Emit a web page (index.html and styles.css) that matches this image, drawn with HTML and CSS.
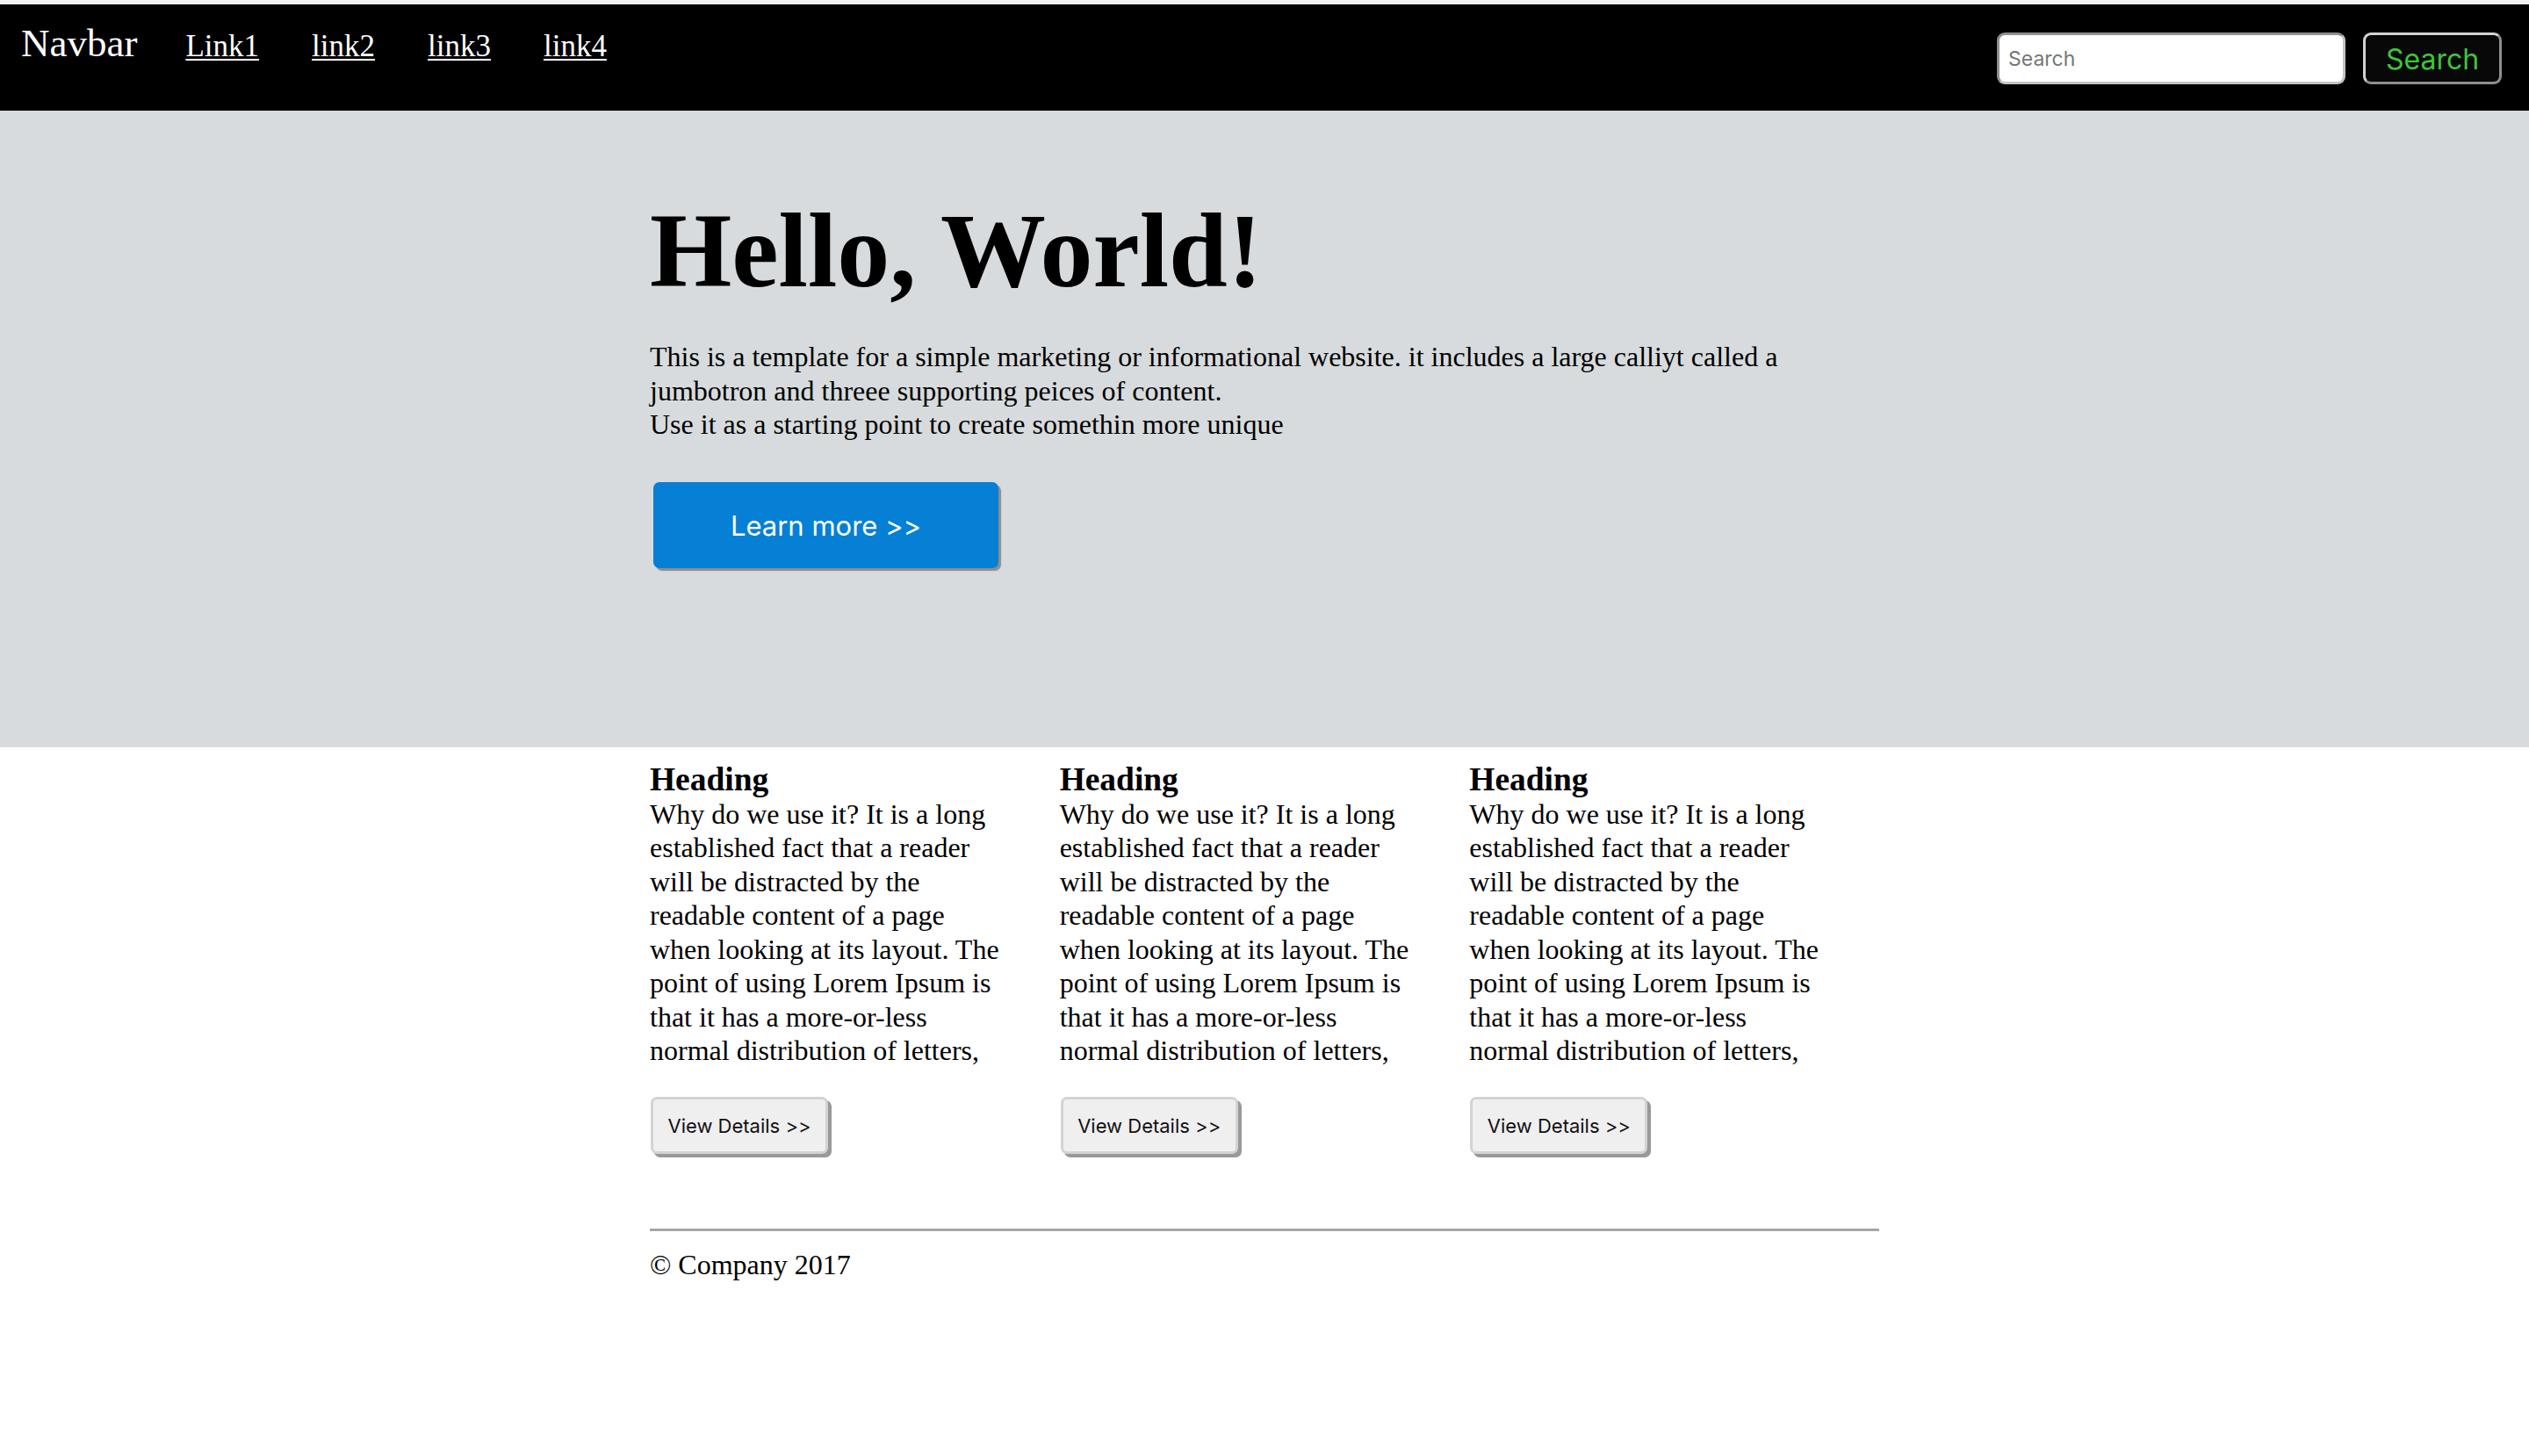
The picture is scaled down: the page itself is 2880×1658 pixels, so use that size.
FILE: index.html
```html
<!DOCTYPE html>
<html lang="en">
<head>
<meta charset="utf-8">
<title>Jumbotron template</title>
<link rel="stylesheet" href="styles.css">
</head>
<body>
<div class="top-strip"></div>
<nav class="navbar">
  <span class="brand">Navbar</span>
  <div class="nav-links">
    <a class="nav-link" href="#">Link1</a>
    <a class="nav-link" href="#">link2</a>
    <a class="nav-link" href="#">link3</a>
    <a class="nav-link" href="#">link4</a>
  </div>
  <form class="search-form">
    <input class="search-input" type="text" placeholder="Search">
    <button class="search-btn" type="button">Search</button>
  </form>
</nav>
<section class="jumbotron">
  <div class="container">
    <h1 class="hero-title">Hello, World!</h1>
    <p class="hero-text">This is a template for a simple marketing or informational website. it includes a large calliyt called a jumbotron and threee supporting peices of content.<br>Use it as a starting point to create somethin more unique</p>
    <button class="btn-primary" type="button">Learn more &gt;&gt;</button>
  </div>
</section>
<main class="container">
  <div class="row">
    <div class="col">
      <h3 class="col-title">Heading</h3>
      <p class="col-text">Why do we use it? It is a long established fact that a reader will be distracted by the readable content of a page when looking at its layout. The point of using Lorem Ipsum is that it has a more-or-less normal distribution of letters,</p>
      <button class="btn-details" type="button">View Details &gt;&gt;</button>
    </div>
    <div class="col">
      <h3 class="col-title">Heading</h3>
      <p class="col-text">Why do we use it? It is a long established fact that a reader will be distracted by the readable content of a page when looking at its layout. The point of using Lorem Ipsum is that it has a more-or-less normal distribution of letters,</p>
      <button class="btn-details" type="button">View Details &gt;&gt;</button>
    </div>
    <div class="col">
      <h3 class="col-title">Heading</h3>
      <p class="col-text">Why do we use it? It is a long established fact that a reader will be distracted by the readable content of a page when looking at its layout. The point of using Lorem Ipsum is that it has a more-or-less normal distribution of letters,</p>
      <button class="btn-details" type="button">View Details &gt;&gt;</button>
    </div>
  </div>
  <hr class="divider">
  <footer class="footer">
    <p class="footer-text">&copy; Company 2017</p>
  </footer>
</main>
</body>
</html>
```
FILE: styles.css
```css
html, body {
  margin: 0;
  padding: 0;
  background: #ffffff;
}

body {
  font-family: "Liberation Serif", "Times New Roman", serif;
  font-size: 32px;
  line-height: 38.5px;
  color: #000;
}

.top-strip {
  height: 5px;
  background: #f1f1f1;
}

.navbar {
  height: 121px;
  box-sizing: border-box;
  background: #000;
  display: flex;
  align-items: baseline;
  padding: 19px 31px 0 24px;
}

.brand {
  color: #fff;
  font-size: 45px;
  line-height: 50px;
}

.nav-links {
  display: flex;
  align-items: baseline;
  gap: 60px;
  margin-left: 55px;
}

.nav-link {
  color: #fff;
  font-size: 35px;
  line-height: 42px;
  text-decoration: underline;
  text-decoration-thickness: 2px;
  text-underline-offset: 3px;
}

.search-form {
  margin: 0 0 0 auto;
  align-self: flex-start;
  margin-top: 13px;
  display: flex;
  gap: 20px;
}

.search-input {
  width: 397px;
  height: 59px;
  box-sizing: border-box;
  border: 3px solid #8f8f8f;
  border-right-color: #c4c4c4;
  border-bottom-color: #c4c4c4;
  border-radius: 9px;
  padding: 0 10px;
  font-family: "Inter", "Liberation Sans", sans-serif;
  font-size: 23px;
  background: #fff;
  outline: none;
}

.search-input::placeholder {
  color: #777;
}

.search-btn {
  width: 158px;
  height: 59px;
  box-sizing: border-box;
  border: 3px solid #d2d2d2;
  border-right-color: #8e8e8e;
  border-bottom-color: #8e8e8e;
  border-radius: 9px;
  background: #080808;
  color: #3ec53a;
  font-family: "Inter", "Liberation Sans", sans-serif;
  font-size: 32px;
  padding: 2px 0 0;
  line-height: 1;
}

.jumbotron {
  background: #d7dbdd;
  padding: 92px 0 204px;
}

.container {
  width: 1400px;
  margin: 0 auto;
}

.hero-title {
  margin: 0;
  font-size: 120px;
  line-height: 136px;
  font-weight: bold;
}

.hero-text {
  margin: 33px 0 46px;
}

.btn-primary {
  display: block;
  margin-left: 4px;
  width: 393px;
  height: 98px;
  border: none;
  border-radius: 7px;
  background: #0580d5;
  color: #fff;
  font-family: "Inter", "Liberation Sans", sans-serif;
  font-size: 31px;
  box-shadow: 3px 3px 1px #8d8d8d;
  padding: 2px 0 0;
}

.row {
  display: grid;
  grid-template-columns: repeat(3, 1fr);
  padding-top: 16px;
}

.col {
  padding-right: 60px;
}

.col-title {
  margin: 0;
  font-size: 37.44px;
  line-height: 41px;
  font-weight: bold;
}

.col-text {
  margin: 0 0 33px;
}

.btn-details {
  display: block;
  margin-left: 1px;
  width: 202px;
  height: 65px;
  box-sizing: border-box;
  border: 3px solid #d3d3d3;
  border-radius: 7px;
  background: #efefef;
  color: #111;
  font-family: "Inter", "Liberation Sans", sans-serif;
  font-size: 22px;
  padding: 2px 0 0;
  box-shadow: 4px 4px 0 #999;
}

.divider {
  margin: 85px 0 0;
  height: 0;
  border: none;
  border-top: 3px solid #a7a7a7;
}

.footer-text {
  margin: 19px 0 0;
}
```
